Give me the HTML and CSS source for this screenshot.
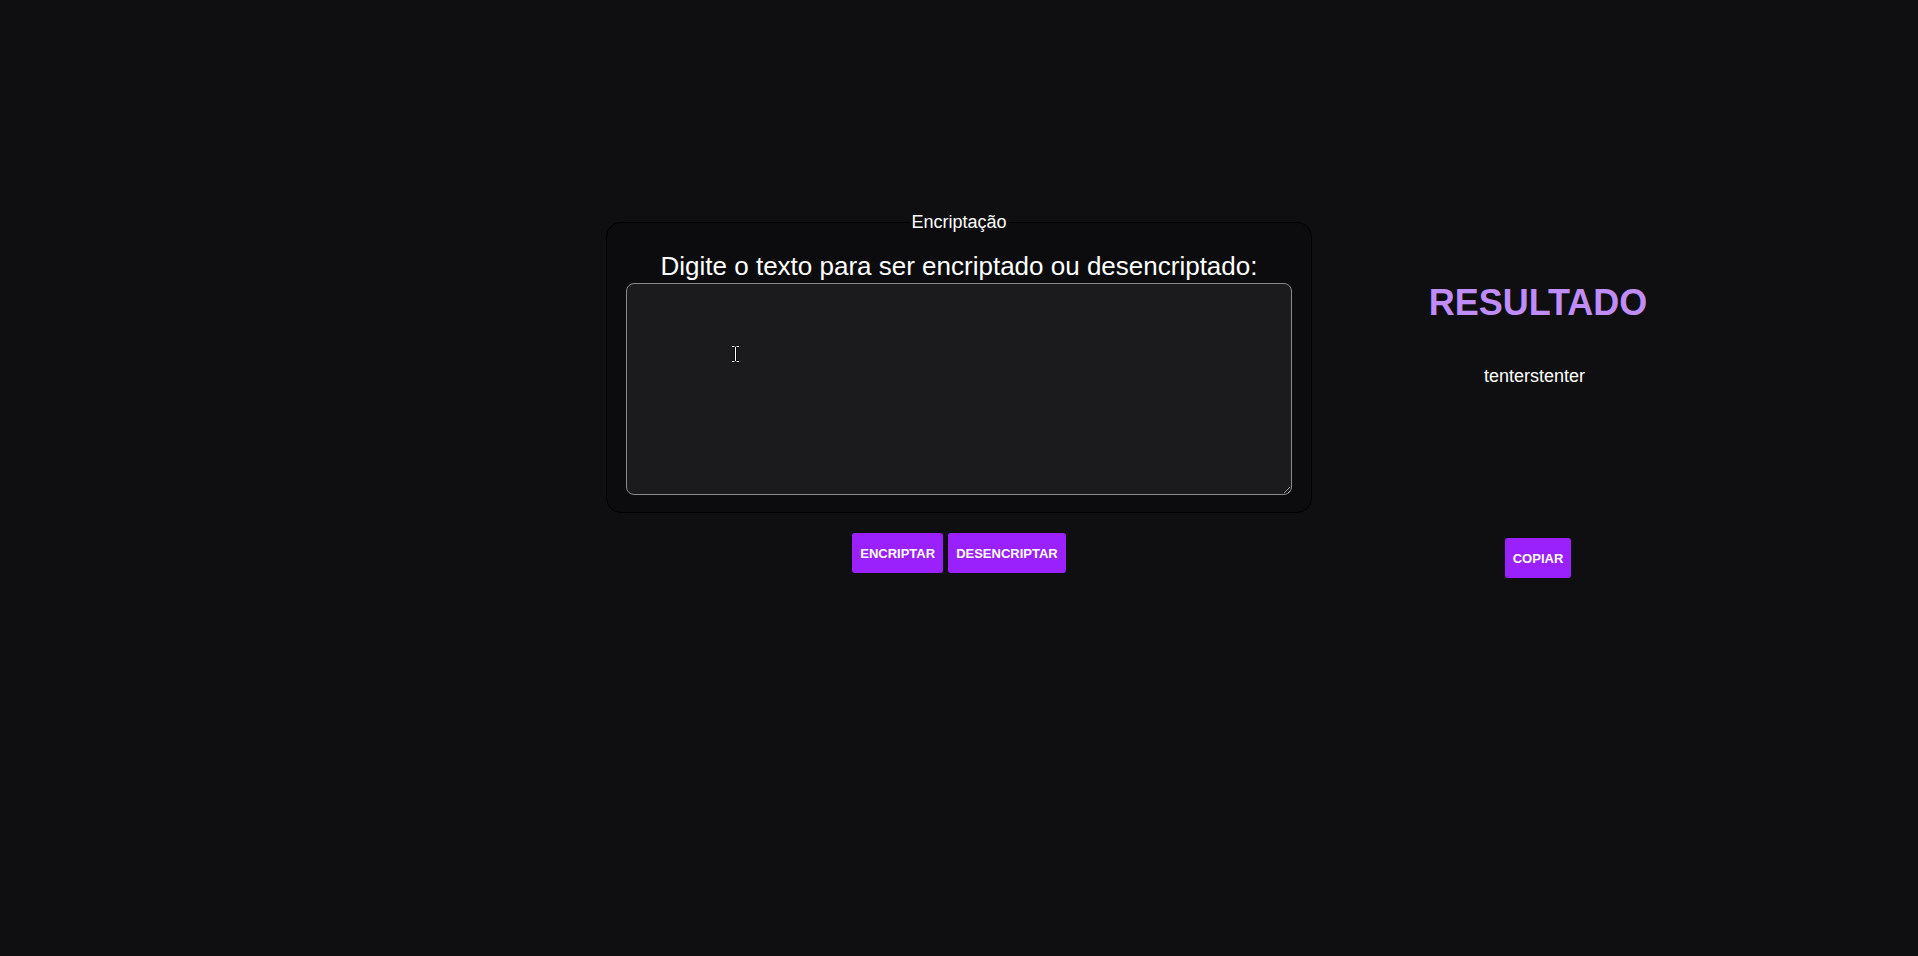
FILE: index.html
```html
<!DOCTYPE html>
<html lang="pt-BR">
<head>
<meta charset="utf-8">
<title>Encriptador</title>
<link rel="stylesheet" href="styles.css">
</head>
<body>
<main class="page">
  <section class="editor">
    <fieldset class="panel">
      <legend class="panel-legend">Encriptação</legend>
      <label class="prompt" for="entrada">Digite o texto para ser encriptado ou desencriptado:</label>
      <div class="field">
        <textarea id="entrada" class="input"></textarea>
        <svg class="cursor" width="9" height="18" viewBox="0 0 9 18" aria-hidden="true">
          <path d="M1 1.5h2.5M5.5 1.5H8M4.5 2v14M1 16.5h2.5M5.5 16.5H8" stroke="#000" stroke-width="2.2" fill="none"/>
          <path d="M1 1.5h2.5M5.5 1.5H8M4.5 2v14M1 16.5h2.5M5.5 16.5H8" stroke="#fff" stroke-width="1" fill="none"/>
        </svg>
      </div>
    </fieldset>
    <div class="actions">
      <button class="btn" type="button">ENCRIPTAR</button>
      <button class="btn" type="button">DESENCRIPTAR</button>
    </div>
  </section>
  <aside class="result">
    <h2 class="result-title">RESULTADO</h2>
    <p class="result-text">tenterstenter</p>
    <button class="btn btn-copy" type="button">COPIAR</button>
  </aside>
</main>
</body>
</html>
```

FILE: styles.css
```css
html, body {
  margin: 0;
  padding: 0;
  background: #0f0f11;
  color: #f2f2f2;
  font-family: "Liberation Sans", Arial, sans-serif;
  height: 100%;
}

.page {
  display: grid;
  grid-template-columns: 1fr 706px 1fr;
  padding-top: 212px;
}

.editor {
  grid-column: 2;
  display: flex;
  flex-direction: column;
  align-items: center;
}

.panel {
  box-sizing: border-box;
  width: 706px;
  margin: 0;
  padding: 0 19px 17px;
  border: 1px solid #000;
  border-radius: 15px;
  background: #0c0c0e;
  display: flex;
  flex-direction: column;
  align-items: stretch;
}

.panel-legend {
  margin: 0 auto;
  padding: 0 2px;
  font-size: 18px;
  color: #ffffff;
}

.prompt {
  display: block;
  margin-top: 18px;
  text-align: center;
  font-size: 26px;
  color: #ffffff;
  line-height: 30px;
}

.field {
  position: relative;
  margin-top: 2px;
}

.input {
  display: block;
  box-sizing: border-box;
  width: 100%;
  height: 212px;
  margin: 0;
  background: #1b1b1d;
  border: 1px solid #8a8a8a;
  border-radius: 8px;
  color: #fff;
  resize: vertical;
}

.cursor {
  position: absolute;
  left: 105px;
  top: 62px;
}

.actions {
  display: flex;
  gap: 5px;
  margin-top: 20px;
}

.btn {
  height: 40px;
  padding: 0 8px;
  border: none;
  border-radius: 3px;
  background: #9b21fc;
  color: #ffffff;
  font-family: "Liberation Sans", Arial, sans-serif;
  font-weight: bold;
  font-size: 13px;
}

.result {
  grid-column: 3;
  width: 300px;
  margin-left: 76px;
  margin-top: 71px;
  display: flex;
  flex-direction: column;
  align-items: center;
}

.result-title {
  margin: 0;
  font-size: 36px;
  line-height: 40px;
  color: #bf8cf8;
  font-weight: bold;
}

.result-text {
  margin: 43px 7px 0 0;
  font-size: 18px;
  line-height: 21px;
  color: #ffffff;
}

.btn-copy {
  margin-top: 151px;
}
```
